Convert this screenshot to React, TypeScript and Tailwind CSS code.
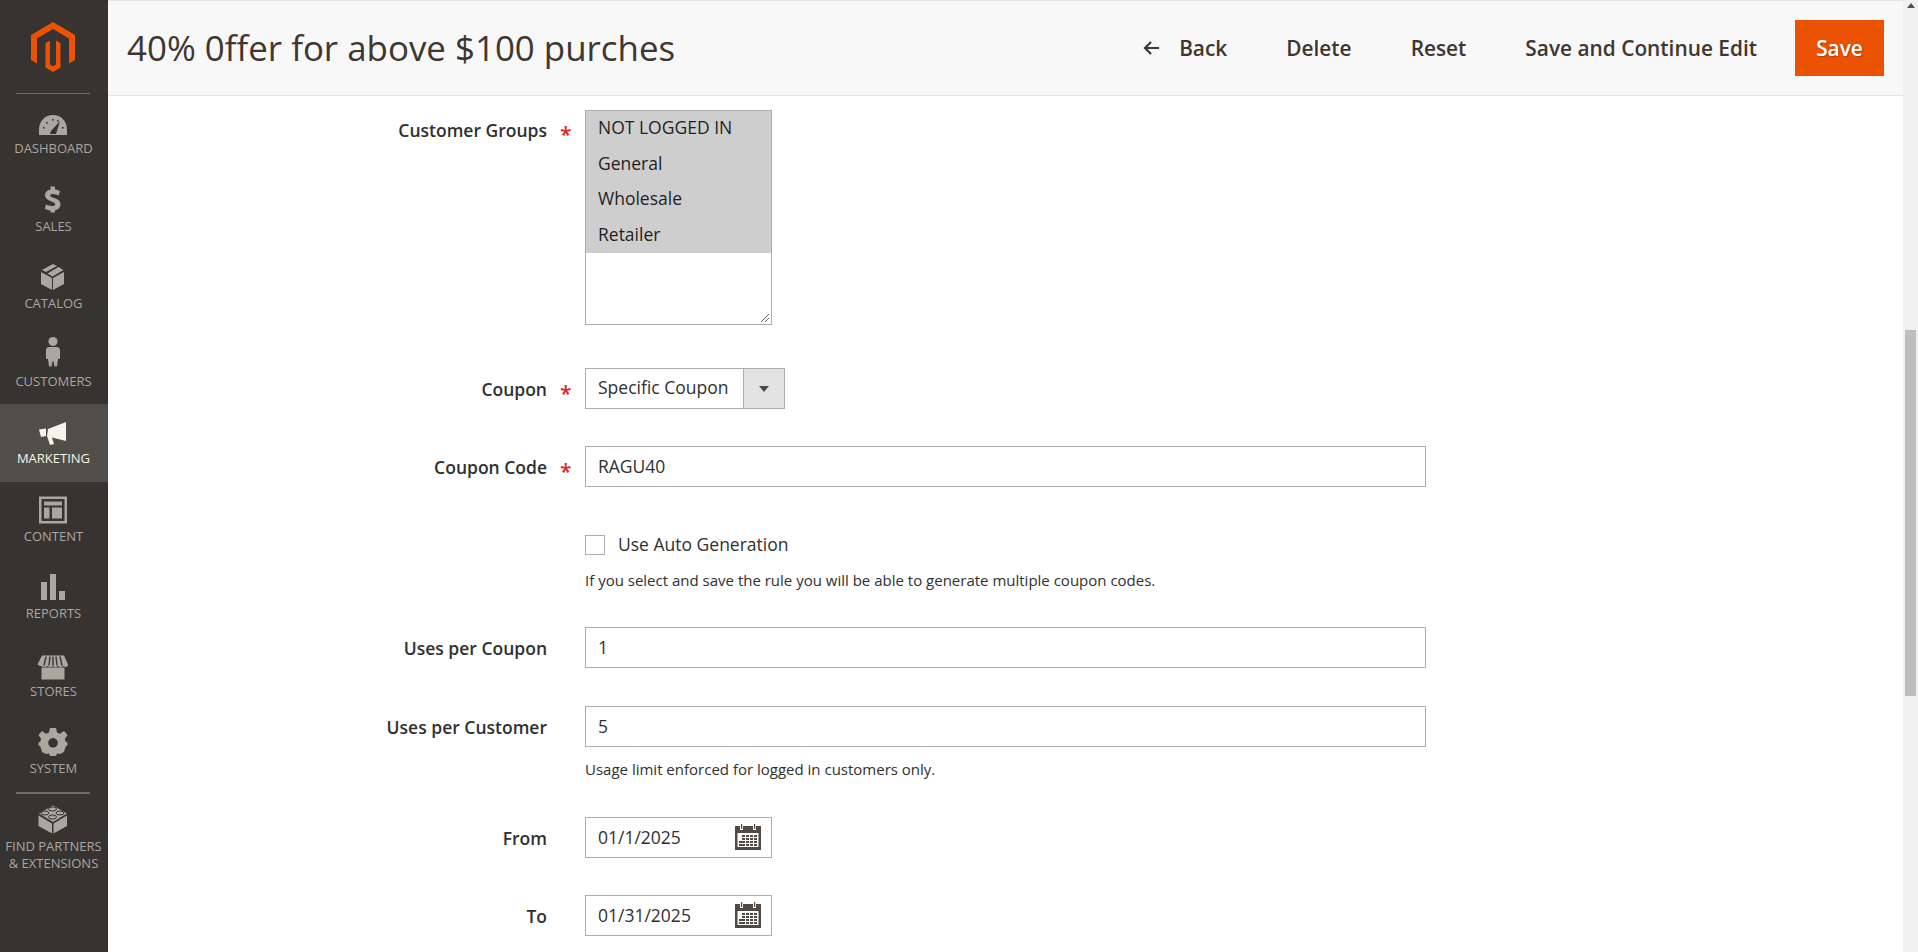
import React from "react";

const F = "font-['Open_Sans',sans-serif]";

const icons: Record<string, React.ReactNode> = {
  dashboard: (
    <>
      <path fillRule="evenodd" d="M39 135 V130 C39 121 45 115 53 115 C61 115 67 121 67 130 V135 Z M51 131 L50 134 L56 134 L60 121 Z" />
      <g fill="#373330">
        <rect x="43" y="127" width="1.6" height="1.6" />
        <rect x="46" y="122" width="1.6" height="1.6" />
        <rect x="52" y="119" width="1.6" height="1.6" />
        <rect x="57" y="120" width="1.6" height="1.6" />
        <rect x="62" y="127" width="1.6" height="1.6" />
      </g>
    </>
  ),
  sales: (
    <path d="M50.5 186 H55 V189 C57.5 189.4 59 190 60 190.6 L58.8 195 C57.4 194.2 55.3 193.4 53 193.4 C51 193.4 50.2 194 50.2 195 C50.2 196 51.4 196.6 54.4 197.6 C58.6 199 60.5 201 60.5 204 C60.5 207 58.4 209.2 55 209.8 V212 H50.5 V210 C48.2 209.8 46 209 44.8 208.2 L46 203.8 C47.6 204.7 49.8 205.5 52 205.5 C54 205.5 55.2 204.8 55.2 203.7 C55.2 202.6 54.2 202 51.4 201 C47.4 199.6 45 197.8 45 194.6 C45 191.8 47 189.7 50.5 189 Z" />
  ),
  catalog: (
    <>
      <path d="M41 272 L52 278 V290 L41 284 Z" />
      <path d="M64 272 L53 278 V290 L64 284 Z" />
      <path d="M53 264 L57 266 L46 272 L42 270 Z" />
      <path d="M58.5 267 L63.5 270 L52.5 276.5 L47.5 273.5 Z" />
    </>
  ),
  customers: (
    <>
      <circle cx="53" cy="341" r="4.6" />
      <path d="M49.5 346.5 H56.5 C58.6 346.5 60 347.5 60 349.5 V358 L58 358.5 L57 366 H54.5 L53.5 361 H52.5 L51.5 366 H49 L48 358.5 L46 358 V349.5 C46 347.5 47.4 346.5 49.5 346.5 Z" />
    </>
  ),
  marketing: (
    <>
      <path d="M48 429 L66 422 V441 L52 437.5 L54 444 L50 445 L47 436 Z" />
      <path d="M39 429.5 L46 428.5 V436 L41 437 Z" />
    </>
  ),
  content: (
    <path fillRule="evenodd" d="M39 496 H67 V523 H39 Z M41.5 498.5 V520.5 H64.5 V498.5 Z M44 501 H62 V505 H44 Z M44 507 H49.5 V518 H44 Z M52 507 H62 V518 H52 Z" />
  ),
  reports: (
    <>
      <rect x="41" y="582" width="6" height="18" />
      <rect x="50" y="574" width="6" height="26" />
      <rect x="59" y="591" width="6" height="9" />
    </>
  ),
  stores: (
    <>
      <path d="M41.5 667 H64.5 V679 H41.5 Z" />
      <path d="M42 655 H64 L68 664 C68 667 65 667 63.5 665.5 C62 667 59.5 667 58 665.5 C56.5 667 54 667 53 665.5 C51.5 667 49 667 47.5 665.5 C46 667 43 667 37.5 664 Z" />
      <g stroke="#373330" strokeWidth="1.4">
        <path d="M46 656 L44 665 M50 656 L49 665 M53 656 V665 M56 656 L57 665 M60 656 L62 665" />
      </g>
    </>
  ),
  system: (
    <path fillRule="evenodd" d="M50 728 H56 L57 732.5 L60 733.8 L64 731 L67.5 735 L64.8 739 L66 742 L67.5 742.5 V745.5 L66 746 L64.8 749 L64 752 L60 754 L57 753.5 L56 756 H50 L49 753.5 L46 754 L42 752 L41.2 749 L40 746 L38.5 745.5 V742.5 L40 742 L41.2 739 L38.5 735 L42 731 L46 733.8 L49 732.5 Z M53 738 A4.8 4.8 0 1 0 53.01 738 Z" />
  ),
  partners: (
    <>
      <path d="M38.5 815 L52 823 V833 L38.5 825.5 Z" />
      <path d="M67 815 L53.5 823 V833 L67 825.5 Z" />
      <path d="M53 805 L67 813 L53 821.5 L39 813 Z" />
      <g fill="none" stroke="#373330" strokeWidth="1">
        <ellipse cx="52.5" cy="808.5" rx="4" ry="2" />
        <ellipse cx="45" cy="812.5" rx="4" ry="2" />
        <ellipse cx="60" cy="812.5" rx="4" ry="2" />
        <ellipse cx="52.5" cy="816.5" rx="4" ry="2" />
      </g>
    </>
  ),
};

const nav = [
  { k: "dashboard", l: "DASHBOARD" },
  { k: "sales", l: "SALES" },
  { k: "catalog", l: "CATALOG" },
  { k: "customers", l: "CUSTOMERS" },
  { k: "marketing", l: "MARKETING", active: true },
  { k: "content", l: "CONTENT" },
  { k: "reports", l: "REPORTS" },
  { k: "stores", l: "STORES" },
  { k: "system", l: "SYSTEM" },
];

function NavIcon({ k, index, active }: { k: string; index: number; active?: boolean }) {
  const top = 94 + 77.5 * index + 4;
  return (
    <svg width="108" height="40" viewBox={`0 ${top} 108 40`} fill={active ? "#f7f3eb" : "#aaa6a0"} className="block shrink-0">
      {icons[k]}
    </svg>
  );
}

function NavItem({ k, l, index, active }: { k: string; l: string; index: number; active?: boolean }) {
  return (
    <div className={`h-[77.5px] pt-[4px] flex flex-col items-center ${active ? "bg-[#524d49] text-[#f7f3eb]" : "text-[#aaa6a0]"}`}>
      <NavIcon k={k} index={index} active={active} />
      <div className="h-[20px] leading-[20px] text-[13px] whitespace-nowrap pr-[1px]">{l}</div>
    </div>
  );
}

function Label({ text, required, className = "" }: { text: string; required?: boolean; className?: string }) {
  return (
    <div className={`w-[477px] shrink-0 flex justify-end ${className}`}>
      <span className="text-[17.5px] leading-[24px] font-semibold text-[#303030] whitespace-nowrap">{text}</span>
      <span className="w-[38px] shrink-0 pl-[13px] pt-[4px] text-[#e22626] text-[21px] font-semibold leading-[24px] text-left">{required ? "*" : ""}</span>
    </div>
  );
}

function Field({ value, className = "" }: { value: string; className?: string }) {
  return (
    <div className={`h-[41px] border border-[#adadad] bg-white px-[12px] flex items-center text-[17.5px] text-[#303030] ${className}`}>
      {value}
    </div>
  );
}

function Calendar() {
  return (
    <svg width="28" height="28" viewBox="0 0 28 28" className="absolute right-[10px] top-[6px]">
      <path fill="#514943" fillRule="evenodd" d="M1 3 H27 V27 H1 Z M3.5 10 V24 H24.5 V10 Z" />
      <g fill="#ffffff">
        <rect x="6" y="0" width="3" height="7" />
        <rect x="19" y="0" width="3" height="7" />
      </g>
      <g fill="#514943">
        <rect x="7" y="1" width="1.2" height="5" />
        <rect x="20" y="1" width="1.2" height="5" />
        <path d="M8 12 H23 V14 H8 Z M8 15 H23 V17 H8 Z M5 18 H23 V20 H5 Z M5 21 H23 V23 H5 Z" />
      </g>
      <g fill="#ffffff">
        <rect x="11" y="11" width="1" height="13" />
        <rect x="15" y="11" width="1" height="13" />
        <rect x="19" y="11" width="1" height="13" />
      </g>
    </svg>
  );
}

function DateField({ value }: { value: string }) {
  return (
    <div className="relative w-[187px]">
      <Field value={value} />
      <Calendar />
    </div>
  );
}

export default function App() {
  return (
    <div className={`${F} flex w-[1918px] h-[952px] overflow-hidden bg-white`}>
      <aside className="w-[108px] shrink-0 h-full bg-[#373330]">
        <div className="h-[94px] relative">
          <svg width="108" height="94" viewBox="0 0 108 94" fill="#eb5202" className="block">
            <path d="M53 22 L75 35 V60 L69 63.5 V38.5 L53 29 L37 38.5 V63.5 L31 60 V35 Z" />
            <path d="M45.5 43 L50 40.5 V64.5 L53 66.3 L56 64.5 V40.5 L60.5 43 V67.5 L53 72 L45.5 67.5 Z" />
          </svg>
          <div className="absolute bottom-0 left-[16px] w-[74px] h-px bg-[#736963]" />
        </div>
        {nav.map((n, i) => (
          <NavItem key={n.k} k={n.k} l={n.l} index={i} active={n.active} />
        ))}
        <div className="mx-[16px] w-[74px] h-[2px] bg-[#736963]" />
        <div className="flex flex-col items-center text-[#aaa6a0] -mt-[2px]">
          <div className="pt-[4px]">
            <NavIcon k="partners" index={9} />
          </div>
          <div className="text-[13px] leading-[17px] text-center mt-[2px] whitespace-nowrap pr-[1px]">
            FIND PARTNERS
            <br />& EXTENSIONS
          </div>
        </div>
      </aside>

      <main className="flex-1 min-w-0 flex flex-col h-full">
        <header className="h-[96px] shrink-0 bg-[#f8f8f8] border-t border-b border-[#e3e3e3] flex items-center pl-[19px] pr-[19px]">
          <h1 className="text-[34.9px] font-normal text-[#41362f] whitespace-nowrap flex-1">40% 0ffer for above $100 purches</h1>
          <div className="flex items-center text-[20.85px] font-semibold text-[#41362f]">
            <svg width="18" height="14" viewBox="0 0 18 14" fill="none" stroke="#41362f" strokeWidth="2.2" className="mr-[18px]">
              <path d="M16 7 H2 M8 1 L2 7 L8 13" />
            </svg>
            <span className="mr-[59px] pt-[2px]">Back</span>
            <span className="mr-[59px] pt-[2px]">Delete</span>
            <span className="mr-[59px] pt-[2px]">Reset</span>
            <span className="mr-[38px] pt-[2px]">Save and Continue Edit</span>
            <div className="w-[89px] h-[56px] pt-[1px] bg-[#eb5202] text-white flex items-center justify-center [text-shadow:1px_1px_1px_rgba(0,0,0,0.25)]">Save</div>
          </div>
        </header>

        <div className="flex-1 min-h-0 overflow-hidden pt-[14px]">
          <div className="flex">
            <Label text="Customer Groups" required className="pt-[8px]" />
            <div className="relative w-[187px] h-[215px] border border-[#adadad] bg-white text-[17.5px] text-[#1f1f1f]">
              <div className="bg-[#cecece]">
                {["NOT LOGGED IN", "General", "Wholesale", "Retailer"].map((o) => (
                  <div key={o} className="h-[35.5px] px-[12px] leading-[33px]">{o}</div>
                ))}
              </div>
              <svg width="10" height="10" viewBox="0 0 10 10" className="absolute right-px bottom-px" stroke="#666" strokeWidth="1" fill="none">
                <path d="M1 9 L9 1 M5 9 L9 5" />
              </svg>
            </div>
          </div>

          <div className="flex mt-[43px]">
            <Label text="Coupon" required className="pt-[9px]" />
            <div className="flex w-[200px] h-[41px] border border-[#adadad] text-[17.5px] text-[#303030]">
              <div className="flex-1 px-[12px] flex items-center pb-[2px]">Specific Coupon</div>
              <div className="w-[41px] bg-[#e3e3e3] border-l border-[#adadad] flex items-center justify-center">
                <div className="w-0 h-0 border-l-[5px] border-r-[5px] border-t-[6px] border-l-transparent border-r-transparent border-t-[#514943]" />
              </div>
            </div>
          </div>

          <div className="flex mt-[37px]">
            <Label text="Coupon Code" required className="pt-[9px]" />
            <Field value="RAGU40" className="w-[841px]" />
          </div>

          <div className="flex mt-[48px]">
            <div className="w-[477px] shrink-0" />
            <div>
              <div className="flex items-center h-[20px]">
                <div className="w-[20px] h-[20px] border border-[#adadad] bg-white" />
                <span className="ml-[13px] pb-[2px] text-[17.5px] text-[#303030]">Use Auto Generation</span>
              </div>
              <div className="mt-[15px] text-[15px] leading-[20px] text-[#303030]">If you select and save the rule you will be able to generate multiple coupon codes.</div>
            </div>
          </div>

          <div className="flex mt-[37px]">
            <Label text="Uses per Coupon" className="pt-[9px]" />
            <Field value="1" className="w-[841px]" />
          </div>

          <div className="flex mt-[38px]">
            <Label text="Uses per Customer" className="pt-[9px]" />
            <Field value="5" className="w-[841px] pb-[1px]" />
          </div>

          <div className="flex mt-[12px]">
            <div className="w-[477px] shrink-0" />
            <div className="text-[15px] leading-[20px] text-[#303030]">Usage limit enforced for logged in customers only.</div>
          </div>

          <div className="flex mt-[38px]">
            <Label text="From" className="pt-[9px]" />
            <DateField value="01/1/2025" />
          </div>

          <div className="flex mt-[37px]">
            <Label text="To" className="pt-[9px]" />
            <DateField value="01/31/2025" />
          </div>
        </div>
      </main>

      <div className="w-[15px] shrink-0 h-full bg-[#f0f0f0] relative">
        <div className="absolute top-[3px] left-[4px] w-0 h-0 border-l-[4px] border-r-[4px] border-b-[5px] border-l-transparent border-r-transparent border-b-[#505050]" />
        <div className="absolute left-[2px] w-[11px] top-[330px] h-[366px] bg-[#bebebe]" />
      </div>
    </div>
  );
}
